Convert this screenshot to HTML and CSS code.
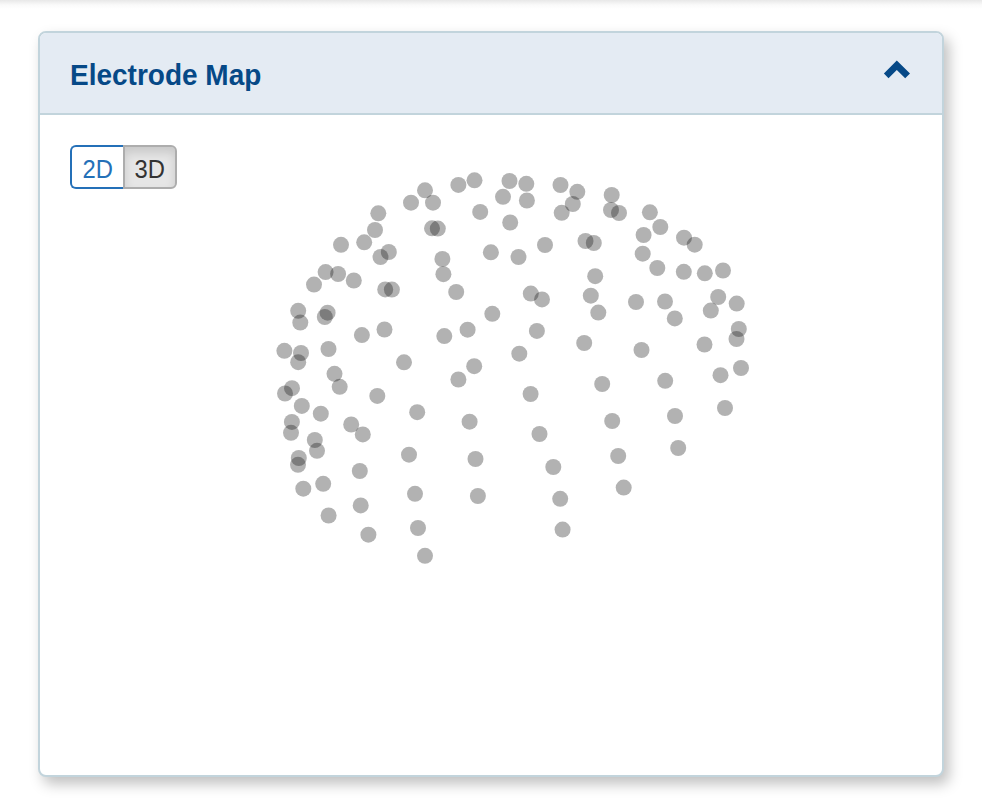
FILE: index.html
```html
<!DOCTYPE html>
<html lang="en">
<head>
<meta charset="utf-8">
<title>Electrode Map</title>
<link rel="stylesheet" href="styles.css">
</head>
<body>
<section class="panel">
  <header class="panel-heading">
    <h2 class="panel-title">Electrode Map</h2>
    <svg class="chevron" viewBox="0 0 26 18" aria-hidden="true"><path d="M12.8 -.6L26 12.6L21.2 17.3L12.8 9.1L4.5 17.3L-.1 12.6Z"/></svg>
  </header>
  <div class="panel-body">
    <div class="btn-group">
      <button class="btn"><span class="btn-label">2D</span></button>
      <button class="btn btn-active"><span class="btn-label">3D</span></button>
    </div>
    <svg class="map" id="map" viewBox="190 145 722 600"></svg>
  </div>
</section>
<script src="map.js"></script>
</body>
</html>
```
FILE: styles.css
```css
* { box-sizing: border-box; }
body {
  margin: 0;
  height: 810px;
  padding: 31px 38px 33px;
  overflow: hidden;
  background: #fff linear-gradient(#e8e8e8, #fafafa 5px, #fff) 0 0 / 100% 9px no-repeat;
  font-family: "Liberation Sans", Arial, sans-serif;
}
.panel {
  display: flex;
  flex-direction: column;
  width: 906px;
  height: 746px;
  border: 2px solid #c2d4dc;
  border-radius: 8px;
  background: #fff;
  box-shadow: 5px 7px 14px rgba(0, 0, 0, .25);
}
.panel-heading {
  display: flex;
  justify-content: space-between;
  height: 82px;
  padding: 0 32px 0 30px;
  border-bottom: 2px solid #c2d4dc;
  border-radius: 6px 6px 0 0;
  background: #e4ebf3;
}
.panel-title {
  margin: 26px 0 0;
  color: #064987;
  font-size: 30px;
  line-height: 32px;
  transform: scaleX(.933);
  transform-origin: left;
}
.chevron {
  width: 26px;
  height: 18px;
  margin-top: 28px;
  overflow: visible;
  fill: #064987;
}
.panel-body {
  display: flex;
  gap: 13px;
  padding: 30px;
}
.btn-group {
  display: flex;
  width: 107px;
  height: 44px;
}
.btn {
  width: 53px;
  padding: 4px 0 0;
  border: 2px solid #2470b8;
  border-right: 0;
  border-radius: 6px 0 0 6px;
  background: #fff;
  color: #2470b8;
  font: 26px/34px "Liberation Sans", Arial, sans-serif;
}
.btn-label {
  display: inline-block;
  transform: scaleX(.915);
}
.btn-active {
  width: 54px;
  border: 2px solid #adadad;
  border-radius: 0 6px 6px 0;
  background: #e6e6e6;
  color: #333;
  box-shadow: inset 0 6px 10px rgba(0, 0, 0, .125);
}
.map {
  width: 722px;
  height: 600px;
}
.map circle {
  fill: #000;
  fill-opacity: .3;
}
```
FILE: map.js
```js
const electrodes = `
425,190.3 411,202.7 433,202.7 378.3,213.3 375,230 364.2,242.3 341,244.8 388.8,252 380.5,257
325.6,272.1 338.1,274 314,284.6 353.8,280.5 385.2,289.4 391.9,289.6 432,228.3 437.8,228.6
458.4,184.9 474.5,180.3 509.5,181 526.3,183.8 503,196.8 526.9,200.5 480.2,211.9 510.2,222.5
560.5,185 577.3,191.8 572.8,204 561.7,212.8 545,245 490.9,252.3 518.5,257 585.5,241 593.8,243
442.4,259 443.4,274.2 456.2,292 530.8,293.6 542,299.4 595.2,276.2 590.8,295.7
611.7,195 611,210 619,213 649.9,212.3 660.3,227 643.6,235 642.7,253.7 657.3,268 684,237.7
694.7,244.7 683.8,271.8 704.8,273.3 723,270.5 718.2,297 736.7,303.6 636,302 665,301.5
298.2,310.8 300.3,322.6 327.6,312.7 324.8,317 361.9,335.1 384.5,329.5 284.4,350.8 301,353
298.2,362.2 328.5,349 334.5,373.8 339.7,386.8 292,388.2 285,393.5 301.8,405.9 320.8,413.7
291.9,421.9 291,432.8 314.8,440 351.2,424.5 362.8,434.4 377.3,395.9 404,362.3 417.2,412.2
492.3,313.8 467.6,329.7 444.3,336.1 536.9,330.9 519.3,353.7 474.2,366.2 458.4,379.5 530.6,394
469.6,421.7 539.5,434 584.2,343 598.3,312.6 674.8,318.4 710.8,310.6 738.8,329 736.5,339
704.5,344.5 641.5,350 741,368 720.5,375.2 725,408 665.2,380.8 602.2,384 675,416 612.2,421
678.2,448 298.8,458 298,464.8 317,450.8 303.3,488.7 323.2,483.8 359.8,471 360.7,505.4
328.6,515.5 368.4,534.7 409,454.7 415,493.8 418,528 425,555.8
475.5,459 477.9,496 553.3,467 560.2,498.8 562.6,529.6 618.2,456 623.7,487.6`;

const map = document.getElementById("map");
for (const point of electrodes.trim().split(/\s+/)) {
  const [x, y] = point.split(",");
  const dot = document.createElementNS("http://www.w3.org/2000/svg", "circle");
  dot.setAttribute("cx", x);
  dot.setAttribute("cy", y);
  dot.setAttribute("r", 8);
  map.append(dot);
}
```
